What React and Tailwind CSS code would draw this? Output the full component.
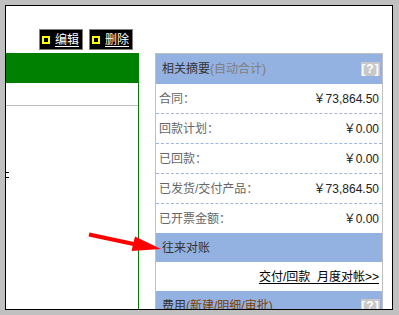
import React from 'react';

const rows = [
  { label: '合同：', value: '￥73,864.50' },
  { label: '回款计划：', value: '￥0.00' },
  { label: '已回款：', value: '￥0.00' },
  { label: '已发货/交付产品：', value: '￥73,864.50' },
  { label: '已开票金额：', value: '￥0.00' },
];

const ToolButton = ({ text }) => (
  <div className="flex h-[21px] w-[44px] items-center border border-[#808080] bg-black pl-[2px]">
    <span className="h-[8px] w-[8px] border-2 border-[#ffff00]"></span>
    <span className="ml-[5px] text-[12px] leading-none text-white underline underline-offset-2">{text}</span>
  </div>
);

const HelpBox = () => (
  <span className="flex h-[14px] w-[19px] items-center justify-center bg-[#c8c8c8] text-[12px] font-bold leading-none tracking-[1px] text-white">
    [?]
  </span>
);

export default function App() {
  return (
    <div className="h-[315px] w-[399px] overflow-hidden bg-[#c0c0c0] pl-[5px] pt-[5px] font-['Liberation_Sans','Noto_Sans_CJK_SC',sans-serif]">
      <div className="relative h-[305px] w-[388px] overflow-hidden border border-black bg-white">
        {/* toolbar */}
        <div className="flex gap-[6px] pl-[33px] pt-[23px]">
          <ToolButton text="编辑" />
          <ToolButton text="删除" />
        </div>

        <div className="mt-[3px] flex gap-[16px]">
          {/* left pane */}
          <div className="h-[260px] w-[133px] border-r border-[#008000]">
            <div className="h-[30px] bg-[#008000]"></div>
            <div className="h-[23px] border-b border-[#c0c0c0]"></div>
            <div className="mt-[66px] h-px w-[3px] bg-black"></div>
            <div className="mt-[4px] h-px w-[3px] bg-black"></div>
          </div>

          {/* summary panel */}
          <div className="h-[270px] w-[228px] border border-[#c0c0c0] text-[12px]">
            <div className="flex h-[30px] items-center justify-between bg-[#93b1e1] pl-[6px] pr-[2px]">
              <span>
                <span className="text-[#333]">相关摘要</span>
                <span className="text-[#808080]">(自动合计)</span>
              </span>
              <HelpBox />
            </div>
            {rows.map((r, i) => (
              <div
                key={r.label}
                className={
                  i < rows.length - 1
                    ? 'flex h-[30px] items-center justify-between border-b border-dashed border-[#9fb6de] pl-[3px] pr-[3px]'
                    : 'flex h-[29px] items-center justify-between pl-[3px] pr-[3px]'
                }
              >
                <span className="text-[#666]">{r.label}</span>
                <span className="text-[#222]">{r.value}</span>
              </div>
            ))}
            <div className="flex h-[29px] items-center bg-[#93b1e1] pl-[6px] text-[#333]">往来对账</div>
            <div className="flex h-[29px] items-center justify-end pr-[3px]">
              <span className="text-black underline underline-offset-2">交付/回款&nbsp;&nbsp;月度对帐&gt;&gt;</span>
            </div>
            <div className="flex h-[29px] items-center justify-between bg-[#93b1e1] pl-[6px] pr-[2px]">
              <span>
                <span className="text-[#333]">费用</span>
                <span className="text-[#804000]">(新建/明细/审批)</span>
              </span>
              <HelpBox />
            </div>
          </div>
        </div>

        {/* red annotation arrow */}
        <svg className="absolute left-0 top-0" width="386" height="303" viewBox="0 0 386 303">
          <line x1="83" y1="228.5" x2="130" y2="238.5" stroke="#ff0000" strokeWidth="4" />
          <polygon points="129,230.5 125.5,245 155,243" fill="#ff0000" />
        </svg>
      </div>
    </div>
  );
}
